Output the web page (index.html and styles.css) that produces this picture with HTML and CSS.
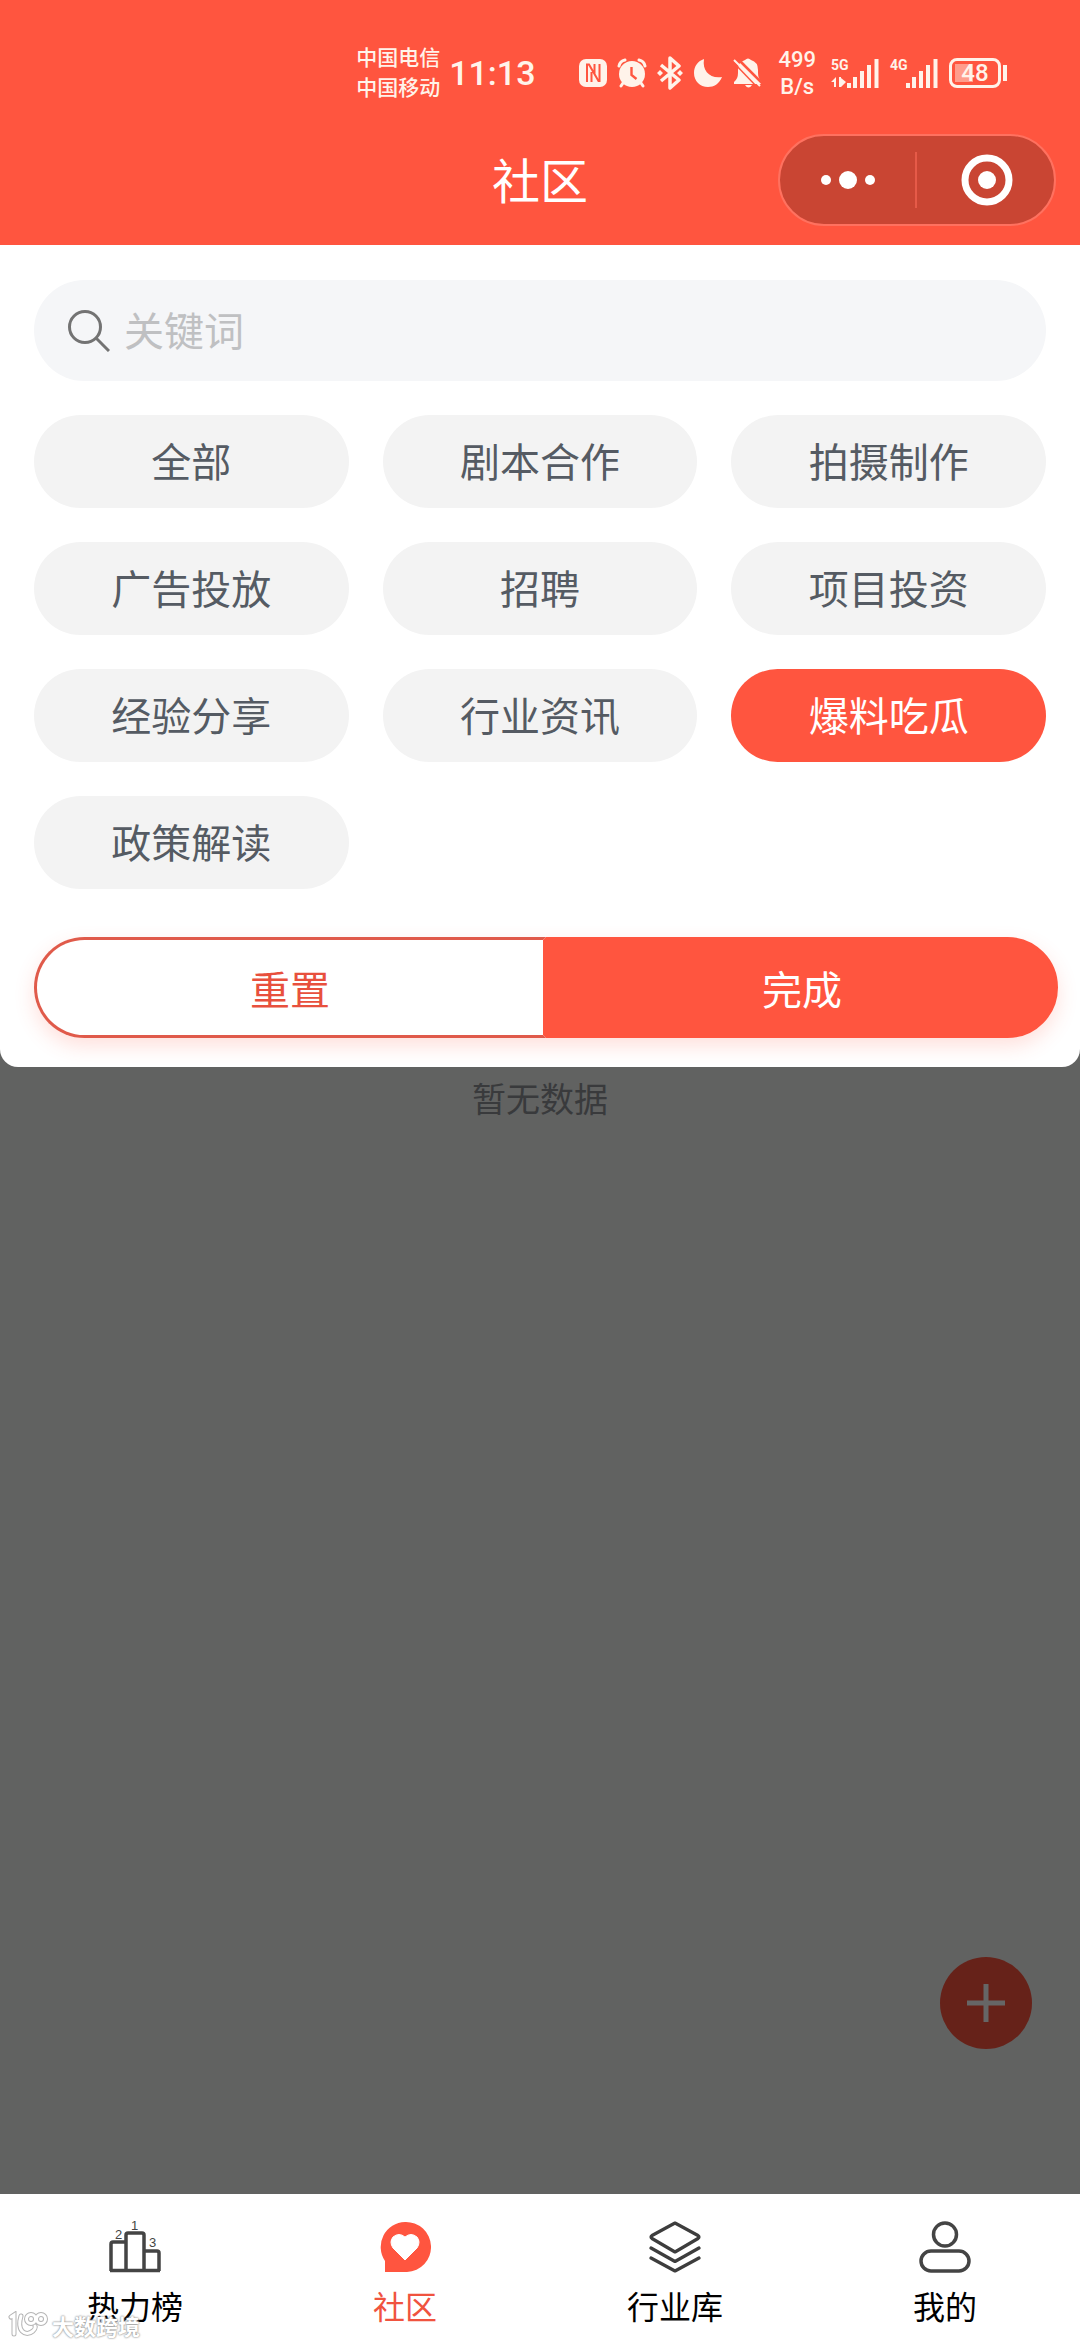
FILE: index.html
```html
<!DOCTYPE html>
<html lang="zh-CN">
<head>
<meta charset="utf-8">
<meta name="viewport" content="width=device-width, initial-scale=1">
<title>社区</title>
<link rel="stylesheet" href="styles.css">
</head>
<body>
<header class="header">
  <div class="status">
    <div class="carriers"><span>中国电信</span><span>中国移动</span></div>
    <time class="clock">11:13</time>
    <div class="status-icons">
      <svg width="28" height="28" viewBox="0 0 28 28"><rect width="28" height="28" rx="7" fill="#fff3ea"/><path d="M8 23V5.500h2L19.500 22h1V5M12.500 23V13M15.500 5v10" fill="none" stroke="#ff553f" stroke-width="2"/></svg>
      <svg width="30" height="30" viewBox="0 0 30 30"><circle cx="15" cy="16" r="13" fill="#fff3ea"/><path d="M2 8Q3 3 8 2M22 2q5 1 6 6M6 25l-2 3M24 25l2 3" fill="none" stroke="#fff3ea" stroke-width="3" stroke-linecap="round"/><path d="M14.500 9v8l5 4" fill="none" stroke="#ff553f" stroke-width="2.400"/></svg>
      <svg width="26" height="34" viewBox="0 0 26 34"><path d="M4 9l18 15-9 8V2l9 8L4 25" fill="none" stroke="#fff3ea" stroke-width="3.500" stroke-linejoin="round"/><path d="M0 17l3-3 3 3-3 3zM20 17l3-3 3 3-3 3z" fill="#fff3ea"/></svg>
      <svg width="30" height="30" viewBox="0 0 30 30"><path d="M11 1C9 13 17 21 29 19 26 26 21 29 15 29 7 29 1 23 1 15 1 8 5 3 11 1z" fill="#fff3ea"/></svg>
      <svg width="30" height="32" viewBox="0 0 30 32"><path d="M1 27v-2q4-3 4-9v-3q0-8 7-10 3-3 6 0 7 2 7 10v3q0 6 4 9v2zM12 28h7q-3.500 5-7 0z" fill="#fff3ea"/><path d="M4 1l26 26" stroke="#ff553f" stroke-width="2.500"/><path d="M1 3l26 26" stroke="#fff3ea" stroke-width="2"/><path d="M0 5l25 26" stroke="#ff553f" stroke-width="1.500"/></svg>
    </div>
    <div class="speed"><span>499</span><span>B/s</span></div>
    <div class="signal">
      <span class="net">5G</span>
      <svg width="48" height="30" viewBox="0 0 48 30"><path d="M0 24l5-5v10H3v-5zM8 19v10h2l5-5-5-4v-1z" fill="#fff3ea"/><path d="M18 25v5M24 19v11M31 13v17M38 7v23M45.500 1v29" stroke="#fff3ea" stroke-width="4"/></svg>
    </div>
    <div class="signal">
      <span class="net">4G</span>
      <svg width="48" height="30" viewBox="0 0 48 30"><path d="M18 25v5M24 19v11M31 13v17M38 7v23M45.500 1v29" stroke="#fff3ea" stroke-width="4"/></svg>
    </div>
    <div class="battery"><span>48</span></div>
  </div>
  <div class="titlebar">
    <h1 class="title">社区</h1>
    <div class="capsule">
      <button class="capsule-btn" type="button" aria-label="更多"><svg width="54" height="20" viewBox="0 0 54 20" fill="#fff"><circle cx="5" cy="10" r="5"/><circle cx="27" cy="10" r="9"/><circle cx="49" cy="10" r="5"/></svg></button>
      <button class="capsule-btn" type="button" aria-label="关闭"><svg width="52" height="52" viewBox="0 0 52 52"><circle cx="26" cy="26" r="22" fill="none" stroke="#fff" stroke-width="7"/><circle cx="26" cy="26" r="9" fill="#fff"/></svg></button>
    </div>
  </div>
</header>

<form class="panel">
  <label class="search">
    <svg width="42" height="42" viewBox="0 0 42 42" fill="none" stroke="#737373" stroke-width="3"><circle cx="17" cy="17" r="15.500"/><path d="M28 28l13 13"/></svg>
    <input class="search-input" type="text" placeholder="关键词" aria-label="关键词">
  </label>
  <div class="chips">
    <button class="chip" type="button">全部</button>
    <button class="chip" type="button">剧本合作</button>
    <button class="chip" type="button">拍摄制作</button>
    <button class="chip" type="button">广告投放</button>
    <button class="chip" type="button">招聘</button>
    <button class="chip" type="button">项目投资</button>
    <button class="chip" type="button">经验分享</button>
    <button class="chip" type="button">行业资讯</button>
    <button class="chip chip-active" type="button" aria-pressed="true">爆料吃瓜</button>
    <button class="chip" type="button">政策解读</button>
  </div>
  <div class="actions">
    <button class="action action-reset" type="reset">重置</button>
    <button class="action action-done" type="button">完成</button>
  </div>
</form>

<main class="content">
  <p class="empty">暂无数据</p>
  <button class="fab" type="button" aria-label="发布"><svg width="38" height="38" viewBox="0 0 38 38"><path d="M19 0v38M0 19h38" stroke="#fff" stroke-width="5"/></svg></button>
  <div class="mask"></div>
</main>

<nav class="tabbar">
  <a class="tab" href="#rank">
    <svg class="rank-icon" width="52" height="52" viewBox="0 0 52 52"><path d="M2 50V23q0-2 2-2h13v29M17 50V14q0-2 2-2h14q2 0 2 2v36M35 30h13q2 0 2 2v18M1 49.500h50" fill="none" stroke="#444" stroke-width="3.500"/><g fill="#444" font-family="Liberation Sans, sans-serif" font-size="13"><text x="22" y="9">1</text><text x="6" y="18">2</text><text x="40" y="26">3</text></g></svg>
    <span>热力榜</span>
  </a>
  <a class="tab tab-active" href="#community" aria-current="page">
    <svg width="52" height="52" viewBox="0 0 52 52"><path d="M26 1a25 25 0 0 1 2 50H6V40A25 25 0 0 1 26 1z" fill="#ff553f"/><path d="M26 39L14 27q-4-6 0-11 6-5 12 0 6-5 12 0 4 5 0 11z" fill="#fff" stroke="#fff" stroke-linejoin="round"/></svg>
    <span>社区</span>
  </a>
  <a class="tab" href="#library">
    <svg width="52" height="52" viewBox="0 0 52 52" fill="none" stroke="#3d3d3d" stroke-width="3.200" stroke-linecap="round" stroke-linejoin="round"><path d="M26 2l23 12.500q2 1.500 0 3L26 31 3 17.500q-2-1.500 0-3zM2 27l24 13.500L50 27M2 37l24 13 24-13"/></svg>
    <span>行业库</span>
  </a>
  <a class="tab" href="#mine">
    <svg width="52" height="52" viewBox="0 0 52 52" fill="none" stroke="#444" stroke-width="3.500"><circle cx="26" cy="13.500" r="11.500"/><rect x="2" y="30" width="48" height="20" rx="10"/></svg>
    <span>我的</span>
  </a>
  <div class="watermark">
    <svg width="40" height="28" viewBox="0 0 40 28" fill="none" stroke-linecap="round"><g stroke="#b5b5b5" stroke-width="5"><path d="M3 6l3-2v19M13 5q-3 10 1 15 5 5 11 0 3-3 2-5"/><circle cx="23" cy="8" r="4.500"/><circle cx="33" cy="8" r="4.500"/></g><g stroke="#fff" stroke-width="3"><path d="M3 6l3-2v19M13 5q-3 10 1 15 5 5 11 0 3-3 2-5"/><circle cx="23" cy="8" r="4.500"/><circle cx="33" cy="8" r="4.500"/></g></svg>
    <span>大数跨境</span>
  </div>
</nav>
</body>
</html>
```

FILE: styles.css
```css
* {
  box-sizing: border-box;
}

body {
  margin: 0;
  min-height: 100vh;
  display: flex;
  flex-direction: column;
  background: #fff;
  color: #000;
  font-family: "Noto Sans CJK SC", "Noto Sans", sans-serif;
}

button {
  margin: 0;
  padding: 0;
  border: 0;
  font: inherit;
  cursor: pointer;
}

svg {
  display: block;
  flex: none;
}

/* Header */
.header {
  background: #ff553f;
  color: #fff3ea;
  padding: 42px 24px 19px;
}

.status {
  display: flex;
  align-items: center;
  justify-content: flex-end;
  height: 62px;
  padding-right: 53px;
  font-family: Roboto, "Noto Sans CJK SC", sans-serif;
}

.carriers,
.speed {
  display: flex;
  flex-direction: column;
  font-size: 21px;
  line-height: 30px;
  font-weight: 500;
}

.clock {
  margin: 0 44px 0 9px;
  font-size: 34px;
  font-weight: 500;
}

.status-icons {
  display: flex;
  align-items: center;
  gap: 10px;
}

.speed {
  margin: 0 15px;
  font-size: 22px;
  line-height: 27px;
  text-align: center;
}

.signal {
  position: relative;
  margin-right: 11px;
}

.net {
  position: absolute;
  left: 0;
  top: 0;
  font-size: 14px;
  line-height: 14px;
  font-weight: 700;
}

.battery {
  position: relative;
  width: 52px;
  height: 30px;
  margin-right: 2px;
  border: 3px solid #fff3ea;
  border-radius: 8px;
  background: linear-gradient(#ff9d8c, #ff9d8c) 3px 3px / 18px 18px no-repeat;
  font-size: 24px;
  line-height: 24px;
  font-weight: 500;
  text-align: center;
}

.battery::after {
  content: "";
  position: absolute;
  right: -9px;
  top: 4px;
  width: 4px;
  height: 16px;
  background: #fff3ea;
}

.titlebar {
  display: grid;
  grid-template-columns: 1fr auto 1fr;
  align-items: center;
  margin-top: 30px;
}

.title {
  grid-column: 2;
  margin: 0;
  padding-bottom: 4px;
  font-size: 48px;
  line-height: 64px;
  font-weight: 400;
  color: #fff;
}

.capsule {
  justify-self: end;
  display: flex;
  align-items: center;
  width: 278px;
  height: 92px;
  border: 2px solid #ff715f;
  border-radius: 46px;
  background: #c94533;
}

.capsule-btn {
  flex: 1;
  height: 56px;
  display: flex;
  align-items: center;
  justify-content: center;
  background: none;
}

.capsule-btn + .capsule-btn {
  padding-left: 2px;
  border-left: 2px solid #e65a48;
}

/* Filter panel */
.panel {
  position: relative;
  z-index: 1;
  padding: 35px 34px 29px;
  border-radius: 0 0 18px 18px;
  background: #fff;
}

.search {
  display: flex;
  align-items: center;
  gap: 14px;
  height: 101px;
  padding: 0 34px;
  border-radius: 51px;
  background: #f5f6f8;
}

.search-input {
  flex: 1;
  min-width: 0;
  padding: 0 0 4px;
  border: 0;
  outline: 0;
  background: none;
  font: inherit;
  font-size: 40px;
  line-height: 60px;
  color: #505860;
}

.search-input::placeholder {
  color: #bfc0c2;
  opacity: 1;
}

.chips {
  display: grid;
  grid-template-columns: repeat(3, 1fr);
  gap: 34px;
  margin-top: 34px;
}

.chip {
  height: 93px;
  padding-bottom: 4px;
  border-radius: 47px;
  background: #f3f3f3;
  color: #555b63;
  font-size: 40px;
  line-height: 60px;
}

.chip-active {
  background: #ff553f;
  color: #fff;
}

.actions {
  display: flex;
  margin: 48px -12px 0 0;
  border-radius: 51px;
  box-shadow: 0 8px 20px rgba(255, 85, 63, 0.18);
}

.action {
  flex: 1;
  height: 101px;
  border: 3px solid #e05a4a;
  font-size: 40px;
  line-height: 60px;
}

.action-reset {
  border-right-color: #ff553f;
  border-radius: 51px 0 0 51px;
  background: #fff;
  color: #e8503d;
}

.action-done {
  border-color: #ff553f;
  border-radius: 0 51px 51px 0;
  background: #ff553f;
  color: #fff;
}

/* Dimmed list below the panel */
.content {
  position: relative;
  flex: 1;
  margin-top: -18px;
  padding-top: 25px;
  background: #f2f5f3;
}

.empty {
  margin: 0;
  font-size: 34px;
  line-height: 48px;
  text-align: center;
  color: #8f9297;
}

.fab {
  position: absolute;
  right: 48px;
  bottom: 145px;
  width: 92px;
  height: 92px;
  display: flex;
  align-items: center;
  justify-content: center;
  border-radius: 50%;
  background: #ff553f;
}

.mask {
  position: absolute;
  inset: 0;
  background: rgba(0, 0, 0, 0.6);
}

/* Tab bar */
.tabbar {
  position: relative;
  display: grid;
  grid-template-columns: repeat(4, 1fr);
  padding: 27px 0 16px;
  background: #fff;
}

.tab {
  display: flex;
  flex-direction: column;
  align-items: center;
  gap: 8px;
  font-size: 32px;
  line-height: 48px;
  color: #000;
  text-decoration: none;
}

.tab-active {
  color: #f0533f;
}

.rank-icon {
  overflow: visible;
}

.watermark {
  position: absolute;
  left: 8px;
  bottom: 6px;
  display: flex;
  align-items: center;
  gap: 4px;
  font-size: 22px;
  line-height: 28px;
  font-weight: 700;
  color: #fff;
  text-shadow: 0 0 2px #888, 0 0 2px #aaa;
}
```
